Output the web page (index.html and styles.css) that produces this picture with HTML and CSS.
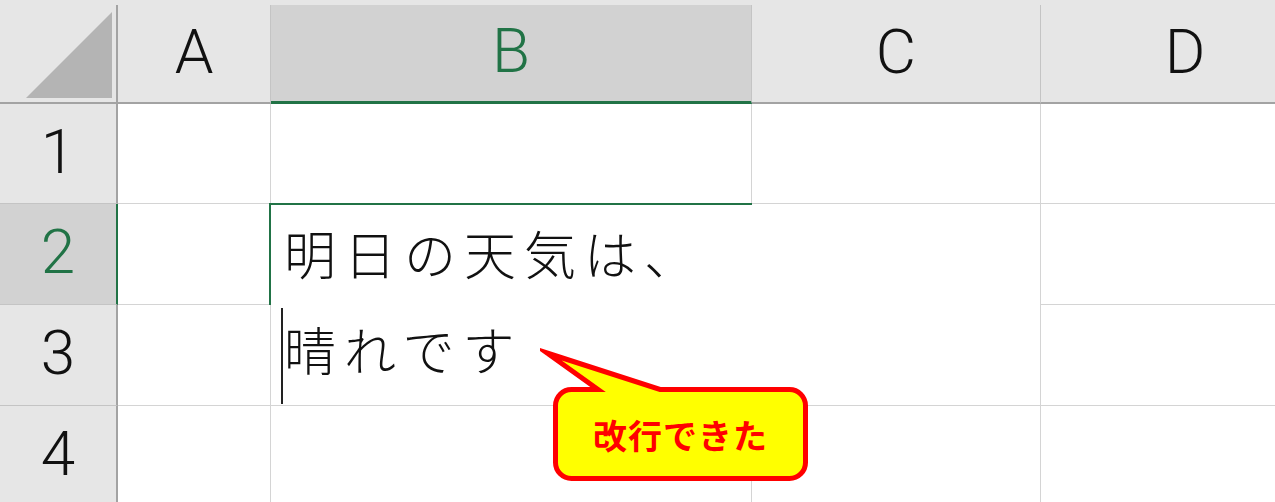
FILE: index.html
```html
<!DOCTYPE html>
<html lang="ja">
<head>
<meta charset="utf-8">
<title>Excel 改行</title>
<link rel="stylesheet" href="styles.css">
</head>
<body>
<div class="sheet">
  <div class="hd corner"><div class="hin corner-in"><svg class="tri" width="90" height="90" viewBox="0 0 90 90"><polygon points="0,86 86,86 86,0" fill="#b4b4b4"/></svg></div></div>
  <div class="hd"><div class="hin">A</div></div>
  <div class="hd"><div class="hin sel">B</div></div>
  <div class="hd"><div class="hin">C</div></div>
  <div class="hd"><div class="hin">D</div></div>

  <div class="rh">1</div>
  <div class="cell"></div>
  <div class="cell"></div>
  <div class="cell"></div>
  <div class="cell"></div>

  <div class="rh rh-sel">2</div>
  <div class="cell"></div>
  <div class="edit">
    <div class="selbox"></div>
    <div class="caret"></div>
    <div class="line">明日の天気は、</div>
    <div class="line">晴れです</div>
  </div>
  <div class="cell"></div>

  <div class="rh">3</div>
  <div class="cell"></div>
  <div class="cell"></div>

  <div class="rh">4</div>
  <div class="cell"></div>
  <div class="cell"></div>
  <div class="cell"></div>
  <div class="cell"></div>
</div>

<div class="callout">
  <svg class="bubble" width="275" height="140" viewBox="0 0 275 140">
    <path d="M31.5 44.5 H58 L7 8 L120 44.5 H249.5 A16 16 0 0 1 265.5 60.5 V117.5 A16 16 0 0 1 249.5 133.5 H31.5 A16 16 0 0 1 15.5 117.5 V60.5 A16 16 0 0 1 31.5 44.5 Z" fill="#ffff00" stroke="#ff0000" stroke-width="5" stroke-linejoin="miter" stroke-miterlimit="20"/>
  </svg>
  <span class="callout-text">改行できた</span>
</div>
</body>
</html>
```

FILE: styles.css
```css
* { box-sizing: border-box; }
html, body { margin: 0; padding: 0; background: #ffffff; }
body {
  width: 1275px;
  height: 502px;
  overflow: hidden;
  position: relative;
  font-family: "Noto Sans CJK JP", "Noto Sans", sans-serif;
}
.sheet {
  display: grid;
  grid-template-columns: 118px 153px 481px 289px 289px;
  grid-template-rows: 104px 100px 101px 101px 101px;
  width: 1330px;
}
.hd {
  background: #e6e6e6;
  padding-top: 5px;
}
.hin {
  height: 99px;
  display: flex;
  align-items: center;
  justify-content: center;
  border-right: 1px solid #c4c4c4;
  border-bottom: 2px solid #a3a3a3;
  font-family: Roboto, "Noto Sans", sans-serif;
  font-weight: 300;
  font-size: 62px;
  color: #111111;
  line-height: 1;
  padding-bottom: 4px;
}
.hin.sel {
  background: #d2d2d2;
  color: #217346;
  border-bottom: 3px solid #217346;
}
.corner-in {
  border-right: 2px solid #a3a3a3;
  justify-content: flex-start;
  align-items: flex-start;
  padding: 7px 0 0 26px;
}
.tri { display: block; }
.rh {
  background: #e6e6e6;
  border-right: 2px solid #a3a3a3;
  border-bottom: 1px solid #c4c4c4;
  display: flex;
  align-items: center;
  justify-content: center;
  font-family: Roboto, "Noto Sans", sans-serif;
  font-weight: 300;
  font-size: 62px;
  color: #111111;
  line-height: 1;
  padding-bottom: 4px;
}
.rh-sel {
  background: #d2d2d2;
  color: #217346;
  border-right-color: #217346;
}
.cell {
  border-right: 1px solid #d4d4d4;
  border-bottom: 1px solid #d4d4d4;
  background: #ffffff;
}
.edit {
  grid-column: 3 / 5;
  grid-row: 3 / 5;
  position: relative;
  background: #ffffff;
  border-right: 1px solid #d4d4d4;
  border-bottom: 1px solid #d4d4d4;
  padding: 1px 0 0 13px;
  font-size: 52px;
  font-weight: 300;
  line-height: 96px;
  letter-spacing: 8px;
  color: #111111;
  white-space: nowrap;
}
.selbox {
  position: absolute;
  left: -2px;
  top: -1px;
  width: 483px;
  height: 102px;
  border-top: 2px solid #217346;
  border-left: 2px solid #217346;
}
.caret {
  position: absolute;
  left: 10px;
  top: 104px;
  width: 2px;
  height: 96px;
  background: #222222;
}
.callout {
  position: absolute;
  left: 540px;
  top: 345px;
  width: 275px;
  height: 140px;
}
.bubble { position: absolute; left: 0; top: 0; }
.callout-text {
  position: absolute;
  left: 13px;
  top: 42px;
  width: 255px;
  height: 94px;
  display: flex;
  align-items: center;
  justify-content: center;
  font-size: 34px;
  font-weight: 700;
  color: #ff0000;
  letter-spacing: 1px;
}
```
